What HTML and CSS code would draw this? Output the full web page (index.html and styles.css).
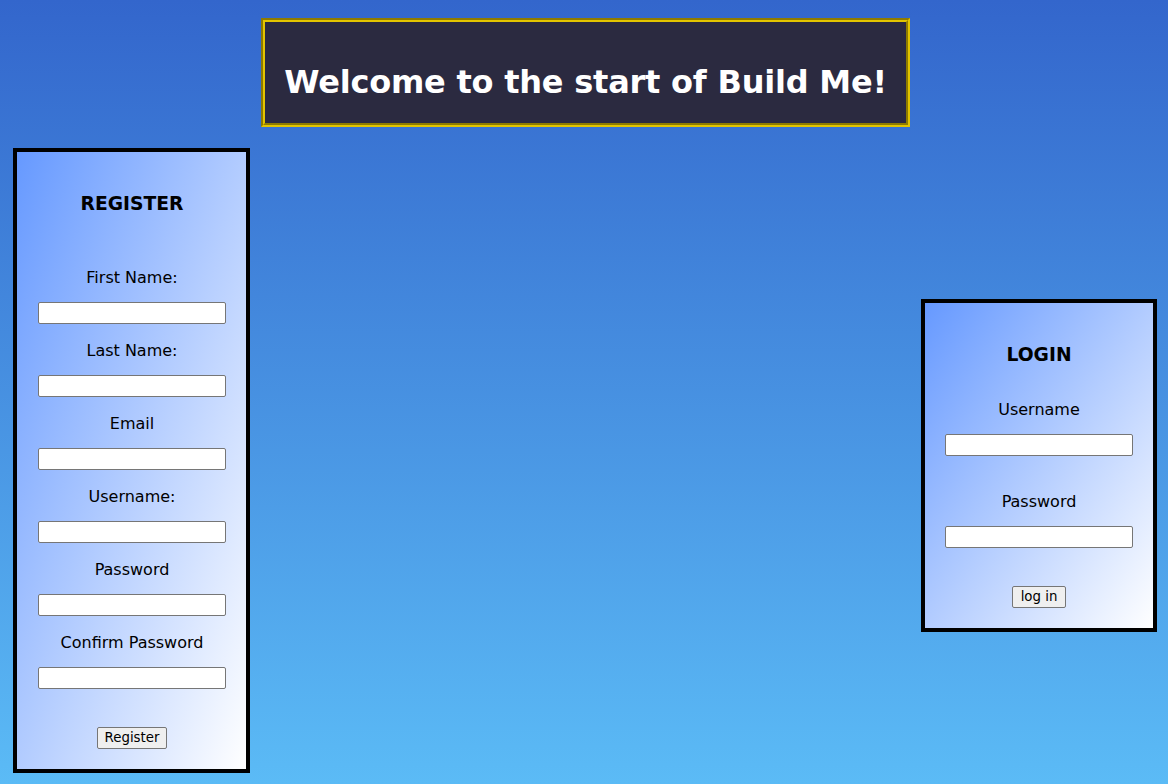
FILE: index.html
```html
<!DOCTYPE html>
<html lang="en">
<head>
<meta charset="utf-8">
<title>Build Me</title>
<link rel="stylesheet" href="styles.css">
</head>
<body>
  <header class="top">
    <div class="banner">
      <h1 class="banner-title">Welcome to the start of Build Me!</h1>
    </div>
  </header>
  <main class="forms">
    <form class="panel panel-register">
      <h3 class="panel-title">REGISTER</h3>
      <p class="label">First Name:</p>
      <input class="field" type="text">
      <p class="label">Last Name:</p>
      <input class="field" type="text">
      <p class="label">Email</p>
      <input class="field" type="text">
      <p class="label">Username:</p>
      <input class="field" type="text">
      <p class="label">Password</p>
      <input class="field" type="password">
      <p class="label">Confirm Password</p>
      <input class="field" type="password">
      <button class="btn btn-register" type="button">Register</button>
    </form>
    <form class="panel panel-login">
      <h3 class="panel-title panel-title-login">LOGIN</h3>
      <p class="label">Username</p>
      <input class="field" type="text">
      <p class="label label-spaced">Password</p>
      <input class="field" type="password">
      <button class="btn btn-login" type="button">log in</button>
    </form>
  </main>
</body>
</html>
```

FILE: styles.css
```css
html {
  min-height: 100%;
  background: linear-gradient(to bottom, #3366cc 0%, #5bbbf6 100%);
}

body {
  margin: 0;
  min-height: 784px;
  font-family: "DejaVu Sans", Verdana, sans-serif;
  color: #000;
}

.top {
  display: flex;
  justify-content: center;
  padding: 18px 0 0 3px;
}

.banner {
  background: #2b2a40;
  border: 4px groove #e2c400;
  padding: 42px 19px 22px;
}

.banner-title {
  margin: 0;
  font-size: 32px;
  line-height: 37px;
  font-weight: bold;
  letter-spacing: -0.22px;
  color: #fff;
  white-space: nowrap;
}

.forms {
  display: flex;
  justify-content: space-between;
  align-items: flex-start;
  padding: 21px 11px 0 13px;
}

.panel {
  box-sizing: content-box;
  width: 188px;
  border: 4px solid #000;
  background: linear-gradient(to bottom right, #6699ff 0%, #ffffff 100%);
  display: flex;
  flex-direction: column;
  align-items: center;
  padding: 20px;
}

.panel-register {
  padding-left: 21px;
}

.panel-login {
  margin-top: 151px;
}

.panel-title {
  margin: 21px 0 36px;
  font-size: 18.72px;
  line-height: 22px;
  font-weight: bold;
}

.panel-title-login {
  margin-bottom: 17px;
}

.label {
  margin: 17px 0 15px;
  font-size: 16px;
  line-height: 19px;
  white-space: nowrap;
}

.label-spaced {
  margin-top: 36px;
}

.field {
  box-sizing: border-box;
  width: 188px;
  height: 22px;
  margin: 0;
  padding: 1px 2px;
  border: 1px solid #767676;
  border-radius: 2px;
  background: #fff;
  font-family: "DejaVu Sans", Verdana, sans-serif;
  font-size: 13.33px;
}

.btn {
  box-sizing: border-box;
  height: 22px;
  margin: 38px 0 0;
  padding: 0 7px;
  border: 1px solid #767676;
  border-radius: 2px;
  background: #efefef;
  font-family: "DejaVu Sans", Verdana, sans-serif;
  font-size: 13.33px;
  line-height: 18px;
  color: #000;
}

.btn-login {
  padding: 0 8px;
}
```
